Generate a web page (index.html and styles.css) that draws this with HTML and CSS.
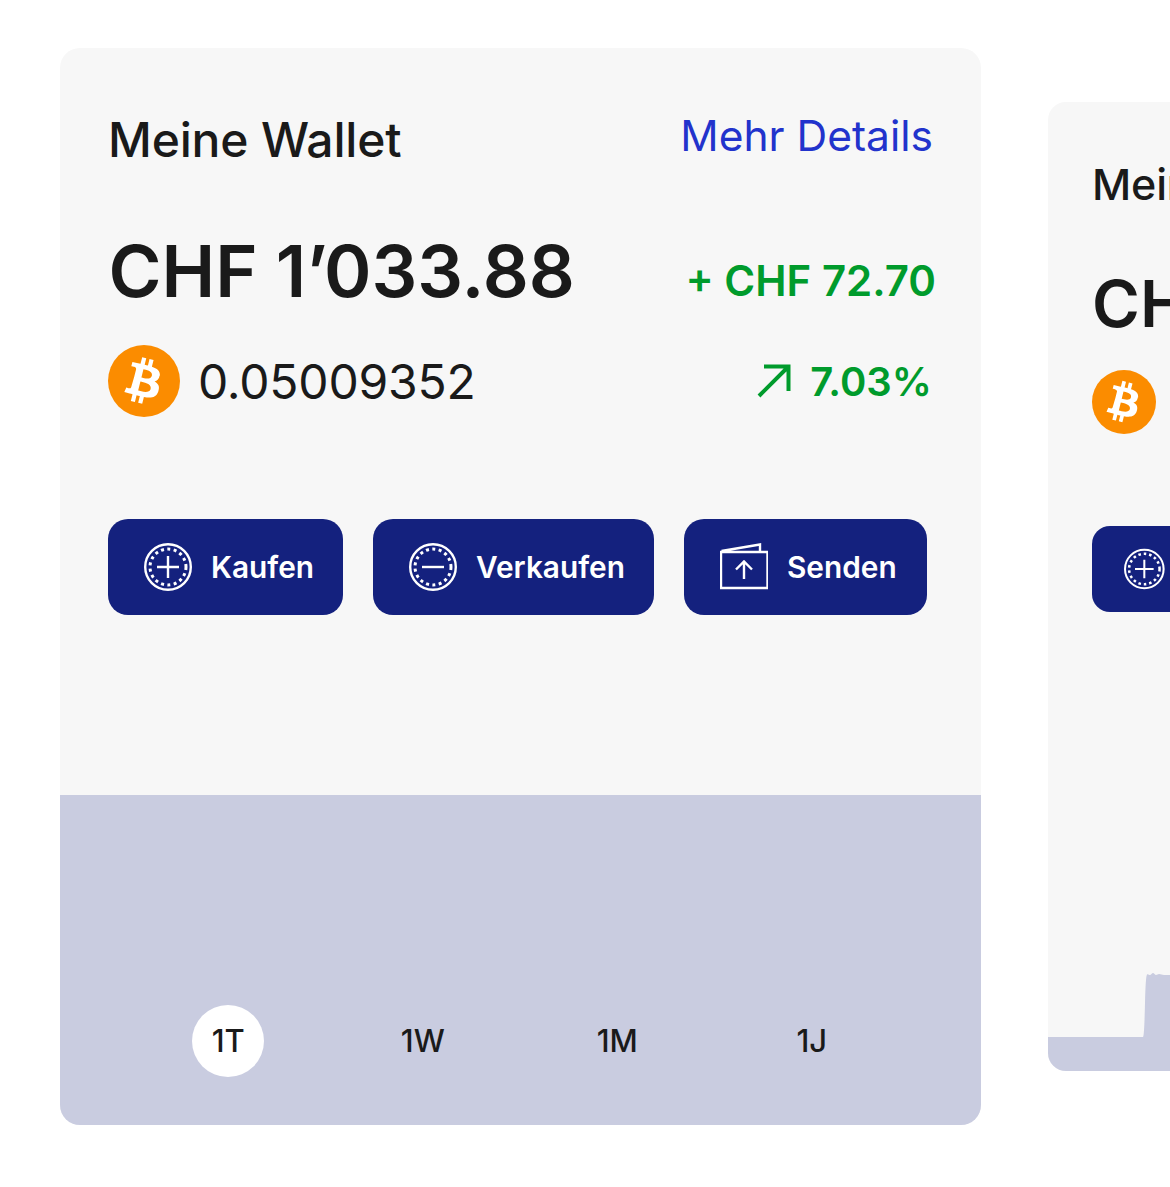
FILE: index.html
```html
<!DOCTYPE html>
<html>
<head>
    <title>Meine Wallet</title>
    <link rel="stylesheet" href="styles.css">
</head>
<body>
    <div class="wallets">
        <section class="card">
            <div class="card-top">
                <div class="row row-title">
                    <h2>Meine Wallet</h2>
                    <a class="details">Mehr Details</a>
                </div>
                <div class="row row-total">
                    <div class="total">CHF 1’033.88</div>
                    <div class="gain">+ CHF 72.70</div>
                </div>
                <div class="row row-coin">
                    <div class="coin">
                        <svg class="btc" viewBox="0 0 64 64"><circle cx="32" cy="32" r="32" fill="#fb8c00"/><path fill="#fff" fill-rule="evenodd" d="M46.1 27.4c.6-4.3-2.6-6.6-7.1-8.1l1.5-5.9-3.6-.9-1.4 5.7c-.9-.2-1.9-.5-2.9-.7l1.4-5.8-3.6-.9-1.5 5.9c-.8-.2-1.5-.3-2.2-.5l-5-1.2-1 3.8s2.7.6 2.6.6c1.5.4 1.7 1.3 1.7 2.1l-1.7 6.7-2.7 9.4c-.2.4-.6 1.1-1.7.8 0 .1-2.6-.7-2.6-.7l-1.8 4.1 4.7 1.2c.9.2 1.7.4 2.6.7l-1.5 6 3.6.9 1.5-5.9c1 .3 1.9.5 2.9.7l-1.5 5.9 3.6.9 1.5-6c6.2 1.2 10.8.7 12.8-4.9 1.6-4.5-.1-7.1-3.3-8.8 2.3-.5 4.1-2.1 4.5-5.3zm-8.2 11.6c-1.1 4.5-8.7 2.1-11.1 1.5l2-8c2.4.6 10.3 1.8 9.1 6.5zm1.1-11.7c-1 4.1-7.3 2-9.3 1.5l1.8-7.2c2 .5 8.6 1.4 7.5 5.7z"/></svg>
                        <span class="amount">0.05009352</span>
                    </div>
                    <div class="percent">
                        <svg class="arrow" viewBox="0 0 34 34"><path d="M2 32 31 3M7 2.500h24.500V27" fill="none" stroke="#009b2c" stroke-width="4"/></svg>
                        <span>7.03%</span>
                    </div>
                </div>
                <div class="actions">
                    <button class="action action-kaufen">
                        <svg class="icon" viewBox="0 0 48 48"><circle cx="24" cy="24" r="22.800" fill="none" stroke="#fff" stroke-width="2.400"/><circle cx="24" cy="24" r="18" fill="none" stroke="#fff" stroke-width="3" stroke-dasharray="3 3.430"/><path d="M24 13v22M13 24h22" stroke="#fff" stroke-width="2.400"/></svg>
                        Kaufen
                    </button>
                    <button class="action action-verkaufen">
                        <svg class="icon" viewBox="0 0 48 48"><circle cx="24" cy="24" r="22.800" fill="none" stroke="#fff" stroke-width="2.400"/><circle cx="24" cy="24" r="18" fill="none" stroke="#fff" stroke-width="3" stroke-dasharray="3 3.430"/><path d="M13 24h22" stroke="#fff" stroke-width="2.400"/></svg>
                        Verkaufen
                    </button>
                    <button class="action action-senden">
                        <svg class="icon" viewBox="0 0 48 48"><path d="M1 9h46.500v36H1zM1.500 8 40 1.500V9M24 36V18M16 26.500 24 18.500 32 26.500" fill="none" stroke="#fff" stroke-width="2.400"/></svg>
                        Senden
                    </button>
                </div>
            </div>
            <div class="chart">
                <div class="tabs">
                    <span class="tab tab-active">1T</span>
                    <span class="tab">1W</span>
                    <span class="tab">1M</span>
                    <span class="tab">1J</span>
                </div>
            </div>
        </section>

        <section class="card card-small">
            <div class="small-top">
                <h2 class="small-title">Meine Wallet</h2>
                <div class="small-total">CHF 1’033.88</div>
                <div class="small-coin">
                    <svg class="btc-small" viewBox="0 0 64 64"><circle cx="32" cy="32" r="32" fill="#fb8c00"/><path fill="#fff" fill-rule="evenodd" d="M46.1 27.4c.6-4.3-2.6-6.6-7.1-8.1l1.5-5.9-3.6-.9-1.4 5.7c-.9-.2-1.9-.5-2.9-.7l1.4-5.8-3.6-.9-1.5 5.9c-.8-.2-1.5-.3-2.2-.5l-5-1.2-1 3.8s2.7.6 2.6.6c1.5.4 1.7 1.3 1.7 2.1l-1.7 6.7-2.7 9.4c-.2.4-.6 1.1-1.7.8 0 .1-2.6-.7-2.6-.7l-1.8 4.1 4.7 1.2c.9.2 1.7.4 2.6.7l-1.5 6 3.6.9 1.5-5.9c1 .3 1.9.5 2.9.7l-1.5 5.9 3.6.9 1.5-6c6.2 1.2 10.8.7 12.8-4.9 1.6-4.5-.1-7.1-3.3-8.8 2.3-.5 4.1-2.1 4.5-5.3zm-8.2 11.6c-1.1 4.5-8.7 2.1-11.1 1.5l2-8c2.4.6 10.3 1.8 9.1 6.5zm1.1-11.7c-1 4.1-7.3 2-9.3 1.5l1.8-7.2c2 .5 8.6 1.4 7.5 5.7z"/></svg>
                </div>
                <button class="action action-small">
                    <svg class="icon-small" viewBox="0 0 48 48"><circle cx="24" cy="24" r="22.800" fill="none" stroke="#fff" stroke-width="2.400"/><circle cx="24" cy="24" r="18" fill="none" stroke="#fff" stroke-width="3" stroke-dasharray="3 3.430"/><path d="M24 13v22M13 24h22" stroke="#fff" stroke-width="2.400"/></svg>
                    Kaufen
                </button>
            </div>
            <svg class="small-chart" viewBox="0 0 122 98" preserveAspectRatio="none">
                <path d="M0 64H95C96 64 96.500 50 97 30 97.500 12 98 3 99 1.500 100 .500 101 2 102 2 103 2 104 0 105 0 106 0 107 2 108 2 109 2 110 1 111 1 113 1 114 2 116 2 118 2 120 2 122 2V98H0Z" fill="#c9cce0"/>
            </svg>
        </section>
    </div>
</body>
</html>
```

FILE: styles.css
```css
* {
    box-sizing: border-box;
}

body {
    margin: 0;
    height: 1187px;
    overflow: hidden;
    background-color: #fff;
    font-family: Inter, Arial, sans-serif;
    color: #1a1a1a;
}

.wallets {
    display: flex;
    align-items: flex-start;
    gap: 67px;
    padding: 48px 0 0 60px;
    width: 1600px;
}

.card {
    flex: none;
    width: 921px;
    height: 1077px;
    display: flex;
    flex-direction: column;
    background-color: #f7f7f7;
    border-radius: 20px;
    overflow: hidden;
}

.card-top {
    height: 747px;
    padding: 60px 48px 0 48px;
}

.row {
    display: flex;
    justify-content: space-between;
}

h2 {
    margin: 0;
    font-weight: 500;
    letter-spacing: -0.17px;
}

.row-title {
    align-items: flex-start;
    height: 62px;
}

.row-title h2 {
    font-size: 48px;
    line-height: 64px;
}

.details {
    font-size: 42.500px;
    line-height: 56px;
    color: #2233cc;
}

.row-total {
    margin-top: 57px;
    height: 88px;
    align-items: flex-start;
}

.total {
    font-size: 72px;
    line-height: 88px;
    font-weight: 600;
    margin-left: 0.5px;
}

.gain {
    margin: 28px -3px 0 0;
    font-size: 42px;
    line-height: 52px;
    font-weight: 600;
    color: #009b2c;
}

.row-coin {
    margin-top: 30px;
    align-items: center;
    height: 72px;
}

.coin {
    display: flex;
    align-items: center;
    gap: 18px;
}

.btc {
    width: 72px;
    height: 72px;
}

.amount {
    font-size: 48px;
    letter-spacing: -0.2px;
}

.percent {
    display: flex;
    align-items: center;
    gap: 19px;
    margin-right: 1px;
    font-size: 40px;
    font-weight: 600;
    color: #009b2c;
}

.arrow {
    width: 34px;
    height: 34px;
}

.actions {
    display: flex;
    gap: 30px;
    margin-top: 102px;
}

.action {
    display: flex;
    align-items: center;
    height: 96px;
    padding: 0 29px 0 36px;
    gap: 19px;
    border: none;
    border-radius: 20px;
    background-color: #14217e;
    color: #fff;
    font-family: inherit;
    font-size: 29.800px;
    font-weight: 600;
}

.action-senden {
    padding-right: 30px;
}

.icon {
    width: 48px;
    height: 48px;
}

.chart {
    flex: 1;
    background-color: #c9cce0;
    padding: 210px 0 0 71px;
}

.tabs {
    display: grid;
    grid-template-columns: repeat(4, 194.5px);
}

.tab {
    justify-self: center;
    width: 72px;
    height: 72px;
    padding-bottom: 2px;
    border-radius: 50%;
    display: flex;
    align-items: center;
    justify-content: center;
    font-size: 31px;
    font-weight: 500;
}

.tab-active {
    background-color: #fff;
}

/* zweite karte, rechts abgeschnitten */
.card-small {
    width: 829px;
    height: 969px;
    margin-top: 54px;
    border-radius: 18px;
    position: relative;
}

.small-top {
    padding: 54px 0 0 44px;
}

.small-title {
    font-size: 43px;
    line-height: 56px;
}

.small-total {
    margin-top: 52px;
    font-size: 65px;
    line-height: 80px;
    font-weight: 600;
}

.small-coin {
    margin-top: 26px;
    height: 64px;
}

.btc-small {
    width: 64px;
    height: 64px;
}

.action-small {
    margin-top: 92px;
    height: 86px;
    width: 212px;
    padding-left: 32px;
    gap: 17px;
    border-radius: 18px;
    font-size: 27px;
}

.icon-small {
    width: 44px;
    height: 44px;
}

.small-chart {
    position: absolute;
    left: 0;
    bottom: 0;
    width: 122px;
    height: 98px;
}
```
